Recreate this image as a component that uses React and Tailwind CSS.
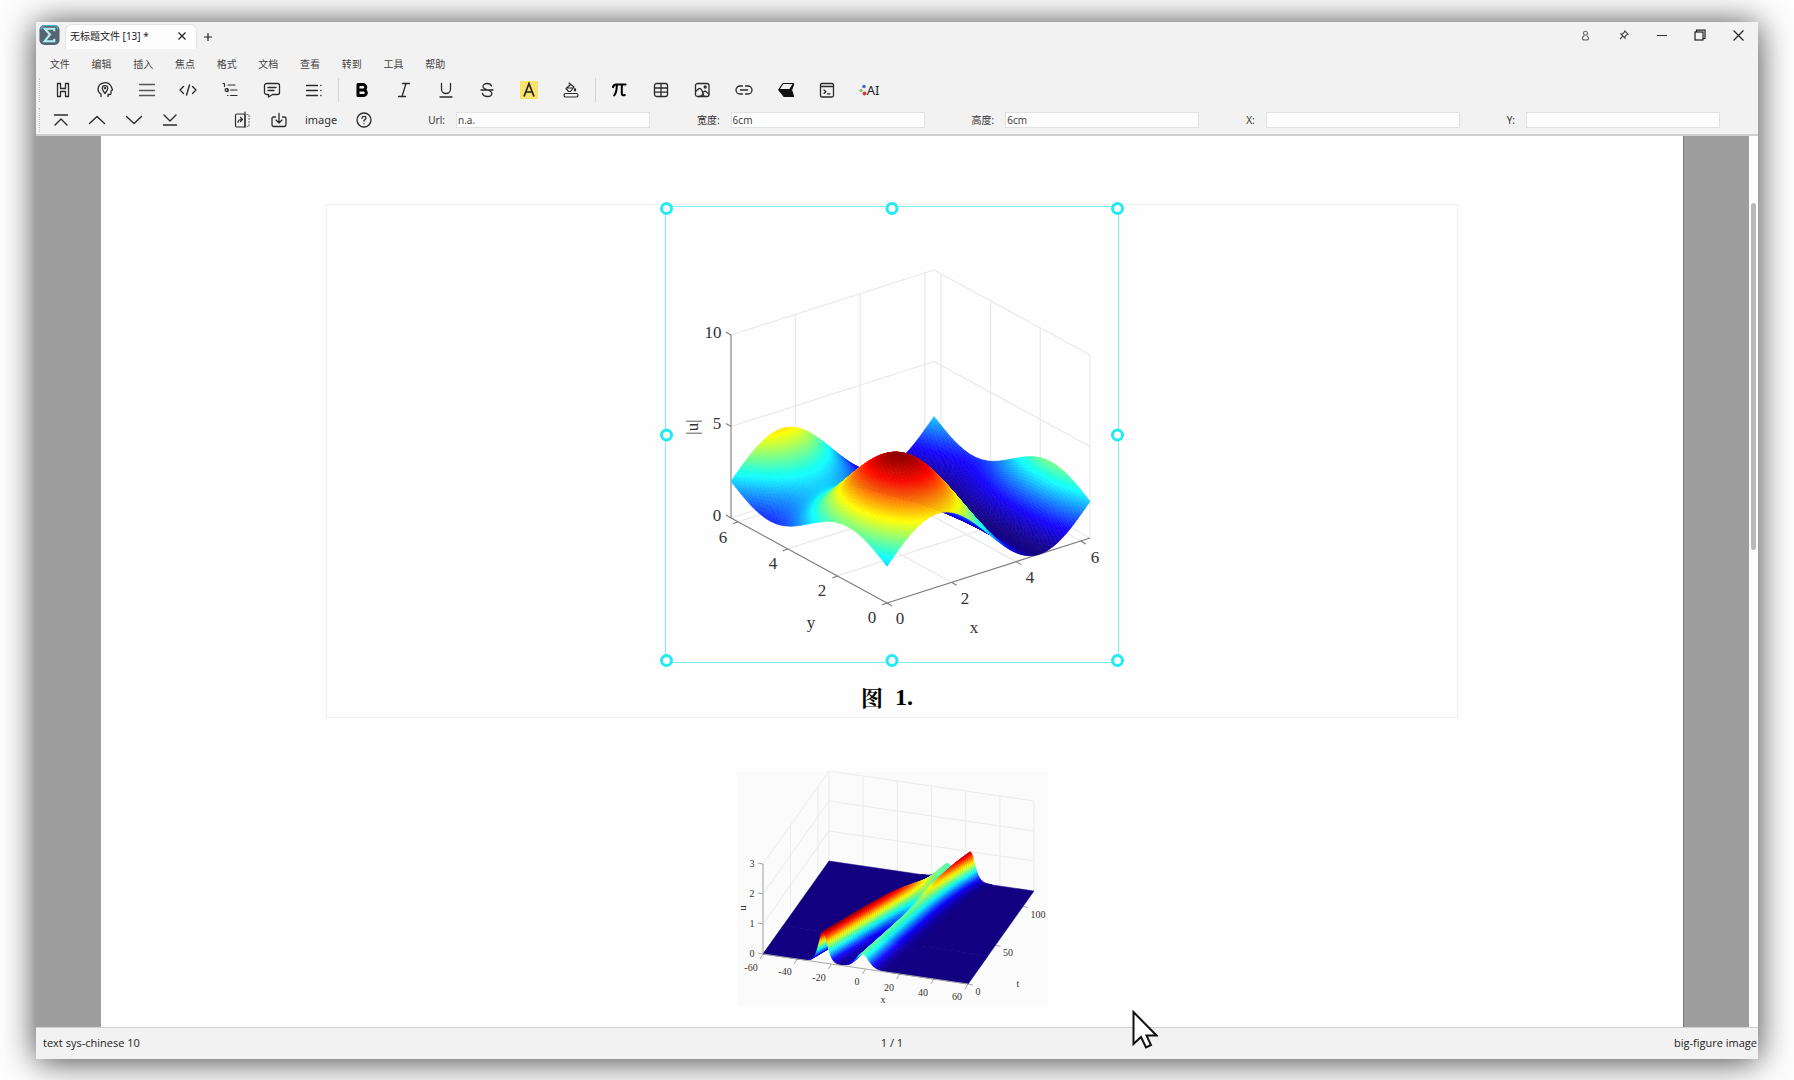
import React from "react";

/* ---------- colour map and projection shared by the two plots ---------- */

function jet(v) {
  const c = Math.max(0, Math.min(1, v));
  const ch = (p) => Math.round(255 * Math.max(0, Math.min(1, 1.5 - Math.abs(4 * c - p))));
  const r = Math.max(ch(3), 18);
  return `rgb(${r},${ch(2)},${ch(1)})`;
}

function makeProjector(o, a, b, h) {
  return (s, t, z) => [o[0] + s * a[0] + t * b[0], o[1] + s * a[1] + t * b[1] - z * h];
}

const fmt = (p) => `${p[0].toFixed(2)},${p[1].toFixed(2)}`;

/* Quads run from the far edge to the near one, so nearer ones cover the rest.
   Behind `flatFrom`, those that stay under `floor` are left to the flat base polygon. */
function buildSurface({ project, f, ns, nt, max, sDescending, floor = -1, flatFrom = 0 }) {
  const z = [];
  for (let i = 0; i <= ns; i++) {
    z.push([]);
    for (let j = 0; j <= nt; j++) z[i].push(f(i / ns, j / nt));
  }
  const quads = [];
  for (let j = nt - 1; j >= 0; j--) {
    for (let n = 0; n < ns; n++) {
      const i = sDescending ? ns - 1 - n : n;
      const mean = (z[i][j] + z[i + 1][j] + z[i + 1][j + 1] + z[i][j + 1]) / 4;
      if (mean < floor && j / nt >= flatFrom) continue;
      const pts = [
        project(i / ns, j / nt, z[i][j]),
        project((i + 1) / ns, j / nt, z[i + 1][j]),
        project((i + 1) / ns, (j + 1) / nt, z[i + 1][j + 1]),
        project(i / ns, (j + 1) / nt, z[i][j + 1]),
      ];
      quads.push({ key: `${i}-${j}`, points: pts.map(fmt).join(" "), fill: jet(mean / max) });
    }
  }
  return quads;
}

function Surface({ quads }) {
  return (
    <g strokeWidth="0.5" strokeLinejoin="round">
      {quads.map((q) => (
        <polygon key={q.key} points={q.points} fill={q.fill} stroke={q.fill} />
      ))}
    </g>
  );
}

function Seg({ a, b, ...rest }) {
  return <line x1={a[0]} y1={a[1]} x2={b[0]} y2={b[1]} {...rest} />;
}

function Labels({ items, size }) {
  return (
    <g fontFamily="'Liberation Serif', serif" fontSize={size} fill="#333" textAnchor="middle">
      {items.map(([text, x, y], i) => (
        <text key={i} x={x} y={y} dominantBaseline="central">
          {text}
        </text>
      ))}
    </g>
  );
}

/* ---------- first figure: (1 + sin x)(2 + sin y) ---------- */

const TAU = Math.PI * 2;
const waveProject = makeProjector([221, 396], [203, -65], [-156, -85], 18.3);
const waveQuads = buildSurface({
  project: waveProject,
  f: (s, t) => (1 + Math.sin(s * TAU)) * (2 + Math.sin(t * TAU)),
  ns: 130,
  nt: 130,
  max: 6.1,
  sDescending: true,
});

function WavePlot() {
  const p = waveProject;
  const ticks = [2, 4, 6].map((v) => v / TAU);
  return (
    <svg viewBox="0 0 452 455" className="block h-[455px] w-[452px]" role="img" aria-label="|u|(x, y)">
      <g stroke="#e9e9e9" strokeWidth="1.2">
        {[0, 5, 10].map((z) => (
          <g key={z}>
            <Seg a={p(0, 1, z)} b={p(1, 1, z)} />
            <Seg a={p(1, 1, z)} b={p(1, 0, z)} />
          </g>
        ))}
        {ticks.map((v) => (
          <g key={v}>
            <Seg a={p(v, 1, 0)} b={p(v, 1, 10)} />
            <Seg a={p(1, v, 0)} b={p(1, v, 10)} />
            <Seg a={p(v, 0, 0)} b={p(v, 1, 0)} />
            <Seg a={p(0, v, 0)} b={p(1, v, 0)} />
          </g>
        ))}
        <Seg a={p(1, 0, 0)} b={p(1, 0, 10)} />
      </g>
      <g stroke="#7a7a7a" strokeWidth="1.1">
        <Seg a={p(0, 1, 0)} b={p(0, 1, 10)} />
        <Seg a={p(0, 0, 0)} b={p(1, 0, 0)} />
        <Seg a={p(0, 0, 0)} b={p(0, 1, 0)} />
        {[0, 5, 10].map((z) => {
          const q = p(0, 1, z);
          return <Seg key={z} a={q} b={[q[0] - 5, q[1] - 3]} />;
        })}
        {[0, ...ticks].map((v) => {
          const q = p(v, 0, 0);
          const r = p(0, v, 0);
          return (
            <g key={v}>
              <Seg a={q} b={[q[0] + 5, q[1] + 3]} />
              <Seg a={r} b={[r[0] - 5, r[1] + 2]} />
            </g>
          );
        })}
      </g>
      <Surface quads={waveQuads} />
      <Labels
        size="17"
        items={[
          ["10", 47, 125], ["5", 51, 216], ["0", 51, 308],
          ["6", 57, 330], ["4", 107, 356], ["2", 156, 383], ["0", 206, 410],
          ["0", 234, 411], ["2", 299, 391], ["4", 364, 370], ["6", 429, 350],
          ["y", 145, 415], ["x", 308, 420],
        ]}
      />
      <text
        transform="translate(26 220) rotate(-90)"
        textAnchor="middle"
        dominantBaseline="central"
        fontFamily="'Liberation Serif', serif"
        fontSize="17"
        fill="#333"
      >
        |u|
      </text>
    </svg>
  );
}

/* ---------- second figure: a two-soliton KdV solution ---------- */

const K1 = 0.59;
const K2 = 0.404;
const SHIFT = ((K1 - K2) / (K1 + K2)) ** 2;
const FLAT_FROM = 0.3;

function solitons(s, t) {
  const x = s * 120 - 60;
  const time = t * 120;
  const e1 = Math.exp(K1 * (x + 24.8) - K1 ** 3 * time);
  const e2 = Math.exp(K2 * (x + 1.8) - K2 ** 3 * time - Math.log(SHIFT));
  const both = SHIFT * e1 * e2;
  const k = K1 + K2;
  const d0 = 1 + e1 + e2 + both;
  const d1 = (K1 * e1 + K2 * e2 + k * both) / d0;
  const d2 = (K1 * K1 * e1 + K2 * K2 * e2 + k * k * both) / d0;
  return 12 * (d2 - d1 * d1);
}

const solitonProject = makeProjector([26, 182], [205, 30], [66, -93], 30);
const solitonBase = [[0, FLAT_FROM], [1, FLAT_FROM], [1, 1], [0, 1]]
  .map(([s, t]) => fmt(solitonProject(s, t, 0)))
  .join(" ");
const solitonQuads = buildSurface({
  project: solitonProject,
  f: solitons,
  ns: 200,
  nt: 150,
  max: 1.05,
  sDescending: false,
  floor: 0.004,
  flatFrom: FLAT_FROM,
});

function SolitonPlot() {
  const p = solitonProject;
  const xs = [0, 1, 2, 3, 4, 5, 6].map((v) => v / 6);
  const ts = [0, 50 / 120, 100 / 120];
  return (
    <svg
      viewBox="0 0 311 235"
      className="block h-[235px] w-[311px] overflow-visible bg-[#fbfbfb]"
      role="img"
      aria-label="u(x, t)"
    >
      <g stroke="#ededed" strokeWidth="1.1">
        {[1, 2, 3].map((z) => (
          <g key={z}>
            <Seg a={p(0, 1, z)} b={p(1, 1, z)} />
            <Seg a={p(0, 0, z)} b={p(0, 1, z)} />
          </g>
        ))}
        {xs.map((v) => (
          <Seg key={v} a={p(v, 1, 0)} b={p(v, 1, 3)} />
        ))}
        {ts.map((v) => (
          <Seg key={v} a={p(0, v, 0)} b={p(0, v, 3)} />
        ))}
      </g>
      <g stroke="#a8a8a8" strokeWidth="1">
        <Seg a={p(0, 0, 0)} b={p(0, 0, 3)} />
        {[0, 1, 2, 3].map((z) => {
          const q = p(0, 0, z);
          return <Seg key={z} a={q} b={[q[0] - 5, q[1] - 1]} />;
        })}
        {xs.map((v) => {
          const q = p(v, 0, 0);
          return <Seg key={v} a={q} b={[q[0] - 3, q[1] + 5]} />;
        })}
        {ts.map((v) => {
          const q = p(1, v, 0);
          return <Seg key={v} a={q} b={[q[0] + 5, q[1] + 1]} />;
        })}
      </g>
      <polygon points={solitonBase} fill={jet(0)} stroke={jet(0)} strokeWidth="0.5" />
      <Surface quads={solitonQuads} />
      <Seg a={p(0, 0, 0)} b={p(1, 0, 0)} stroke="#a8a8a8" strokeWidth="1" />
      <Labels
        size="10"
        items={[
          ["3", 15, 91], ["2", 15, 121], ["1", 15, 151], ["0", 15, 181],
          ["-60", 14, 195], ["-40", 48, 199], ["-20", 82, 205], ["0", 120, 209],
          ["20", 152, 215], ["40", 186, 220], ["60", 220, 224], ["x", 146, 227],
          ["0", 241, 219], ["50", 271, 180], ["100", 301, 142], ["t", 281, 211],
        ]}
      />
      <text
        transform="translate(5 136) rotate(-90)"
        textAnchor="middle"
        dominantBaseline="central"
        fontFamily="'Liberation Serif', serif"
        fontSize="11"
        fill="#333"
      >
        u
      </text>
    </svg>
  );
}

/* ---------- icons ---------- */

function Icon({ children, width = "1.4", color = "#2b2b2b" }) {
  return (
    <svg
      viewBox="0 0 18 18"
      className="h-[18px] w-[18px]"
      fill="none"
      stroke={color}
      strokeWidth={width}
      strokeLinecap="round"
      strokeLinejoin="round"
      aria-hidden="true"
    >
      {children}
    </svg>
  );
}

const textStyleIcons = {
  heading: (
    <Icon width="1.3">
      <path d="M3.500 2.500h3v5h5v-5h3v13h-3v-5h-5v5h-3z" />
    </Icon>
  ),
  focus: (
    <Icon width="1.3">
      <path d="M5 15.500v-2.500C2.800 11.800 2 10 2 8a7 7 0 0 1 13.200-2.500l1.300 3.500-1.500 1v2.500q0 1-1.500 1h-1.500v2" />
      <path d="M9 12.500C7 10 6.300 8.800 6.300 7.300a2.700 2.700 0 0 1 5.400 0C11.700 8.800 11 10 9 12.500z" />
      <circle cx="9" cy="7.200" r=".5" />
    </Icon>
  ),
  lines: (
    <Icon width="1.3" color="#555">
      <path d="M1.500 3.500h15M1.500 9.500h15M1.500 14.500h15" />
    </Icon>
  ),
  code: (
    <Icon>
      <path d="M4.500 5.500 1 9l3.500 3.500M13.500 5.500 17 9l-3.500 3.500M10.500 4 7.500 14" />
    </Icon>
  ),
  outline: (
    <Icon width="1.2">
      <path d="M2 2.500h1.500v3M7 4h7M9.500 9h6.500M9.500 14.500h6.500" />
      <circle cx="5.500" cy="9" r="1.400" />
      <path d="M7 7.800v3M6.500 14.500h.5" />
    </Icon>
  ),
  comment: (
    <Icon width="1.3">
      <path d="M3.500 2.500h11a2 2 0 0 1 2 2v7a2 2 0 0 1-2 2H9.500L5.500 16v-2.500h-2a2 2 0 0 1-2-2v-7a2 2 0 0 1 2-2z" />
      <path d="M5 6.500h8M5 9.500h6" />
    </Icon>
  ),
  paragraph: (
    <Icon width="1.3">
      <path d="M1.500 4.500h11M1.500 9.500h11M1.500 14.500h11M15.800 4.500h.2M15.800 9.500h.2M15.800 14.500h.2" />
    </Icon>
  ),
};

const fontIcons = {
  bold: (
    <Icon width="3" color="#000">
      <path d="M5 9h5.500a2.800 2.800 0 0 1 0 5.600H5V3.400h5a2.800 2.800 0 0 1 0 5.600" />
    </Icon>
  ),
  italic: (
    <Icon width="1.3">
      <path d="M7.500 2.500h7M3.500 15.500h7M11 2.500 7 15.500" />
    </Icon>
  ),
  underline: (
    <Icon width="1.3">
      <path d="M4.500 2.500V8a4.500 4.500 0 0 0 9 0V2.500M3 16h12" />
    </Icon>
  ),
  strike: (
    <Icon width="1.3">
      <path d="M13.500 5C13 3.300 11.300 2.500 9.200 2.500 7 2.500 5 3.500 5 5.500c0 4 8.800 2.500 8.800 7 0 2-2 3-4.300 3-2.700 0-4.500-1-5-3M3 9h12" />
    </Icon>
  ),
  highlight: (
    <svg viewBox="0 0 18 18" className="h-[18px] w-[18px]" aria-hidden="true">
      <rect width="18" height="18" fill="#f8e36c" />
      <path d="M4 15.500 9 2.500l5 13M5.800 11h6.400" fill="none" stroke="#222" strokeWidth="1.700" />
    </svg>
  ),
  fill: (
    <Icon width="1.2">
      <rect x="2" y="12.500" width="14" height="3.500" rx="1.700" />
      <path d="m7 2 5 4-3.500 4.500h-2L4 7.500 8 4M4.500 7h6.500" />
      <path d="M13 7.500q1.300 1.800 0 2.500-1.300-.7 0-2.500z" fill="#2b2b2b" />
    </Icon>
  ),
};

const insertIcons = {
  formula: (
    <Icon color="#000">
      <path d="M3 6Q4 3.500 6 3.500h9.500" strokeWidth="2.200" />
      <path d="M6.800 4.500Q6.800 11 4.200 14.500M11.800 4.500v8q0 2.500 3 1.500" strokeWidth="2" />
    </Icon>
  ),
  table: (
    <Icon width="1.3">
      <rect x="2.500" y="2.500" width="13" height="13" rx="2" />
      <path d="M2.500 7h13M2.500 11.200h13M9 2.500v13" />
    </Icon>
  ),
  picture: (
    <Icon width="1.3">
      <rect x="2.500" y="2.500" width="13.500" height="13" rx="2" />
      <circle cx="12.200" cy="6" r="1" />
      <path d="M2.500 10.500 6 7.500q1.500-.5 3 2l2 5.500M9.700 11.500l2.300-1.500 4 3M6 15.500q3 0 4-3" />
    </Icon>
  ),
  link: (
    <Icon width="1.3">
      <path d="M7.500 5H5a4 4 0 0 0 0 8h2.500M10.500 5H13a4 4 0 0 1 0 8h-2.500M5.500 9h7" />
    </Icon>
  ),
  eraser: (
    <Icon width="1.2" color="#111">
      <path d="M6 2.500h10.500L13 8.500H2z" />
      <path d="M1.800 9h10.700l4-5.500-2 5.500 2 6.500H7z" fill="#111" />
    </Icon>
  ),
  terminal: (
    <Icon width="1.3">
      <rect x="2.500" y="2.500" width="13" height="13.500" rx="1.500" />
      <path d="M2.500 5.500h13M6 9l2 1.700-2 1.700M9.500 12.800h2.500" />
    </Icon>
  ),
};

function AiMark() {
  return (
    <span className="flex items-center" aria-hidden="true">
      <svg viewBox="0 0 8 14" className="h-[14px] w-[8px]">
        <circle cx="5" cy="3.500" r="1.800" fill="#4a63c9" />
        <circle cx="2" cy="7.500" r="1.700" fill="#8fc06a" />
        <circle cx="5.500" cy="10.500" r="1.900" fill="#c83f3f" />
      </svg>
      <span className="text-[13px] leading-none text-[#222]">AI</span>
    </span>
  );
}

function IconButton({ label, children }) {
  return (
    <button type="button" aria-label={label} title={label} className="flex h-[24px] items-center justify-center">
      {children}
    </button>
  );
}

function Grip() {
  return <span className="h-[24px] w-[6px] border-l border-dotted border-[#bdbdbd]" />;
}

function Divider() {
  return <span className="h-[24px] w-px bg-[#d4d4d4]" />;
}

/* ---------- window chrome ---------- */

function TitleBar() {
  return (
    <header className="flex h-[28px] items-start pl-[3px]">
      <svg viewBox="0 0 22 22" className="mt-[2px] h-[22px] w-[21px]" aria-hidden="true">
        <rect x=".5" y=".5" width="21" height="21" rx="5" fill="#54666f" />
        <path d="M2 5a5 5 0 0 1 4-4h10a5 5 0 0 1 4 4" fill="none" stroke="#3fb4e6" strokeWidth="1.2" />
        <path d="M16 7V4.500H6l5.500 6L6 17.500h10V15" fill="none" stroke="#b5eef6" strokeWidth="2.2" />
      </svg>
      <div className="mt-[2px] ml-[5px] flex h-[25px] w-[132px] items-center justify-between rounded-t-[6px] border border-b-0 border-[#e4e4e4] bg-[#fdfdfd] pb-[2px] pl-[4px]">
        <span className="text-[10px] text-[#222]">无标题文件 [13] *</span>
        <button type="button" aria-label="关闭标签" className="flex h-full w-[29px] items-center justify-center">
          <svg viewBox="0 0 8 8" className="h-[8px] w-[8px]" stroke="#222" strokeWidth="1.2">
            <path d="M.5.5l7 7M7.500.5l-7 7" />
          </svg>
        </button>
      </div>
      <button type="button" aria-label="新标签" className="mt-[2px] flex h-[26px] w-[22px] items-center justify-center">
        <svg viewBox="0 0 8 8" className="h-[8px] w-[8px]" stroke="#222" strokeWidth="1.2">
          <path d="M4 0v8M0 4h8" />
        </svg>
      </button>
      <div className="ml-auto grid w-[192px] grid-cols-5">
        <button type="button" aria-label="账户" className="flex h-[26px] items-center justify-center">
          <svg viewBox="0 0 10 12" className="h-[11px] w-[9px]" fill="none" stroke="#666" strokeWidth="1.2">
            <circle cx="5" cy="3.500" r="2.200" />
            <path d="M3.500 6.200Q1.500 7.500 1.500 9.500q0 1.500 3.500 1.500t3.500-1.500q0-2-2-3.300" />
          </svg>
        </button>
        <button type="button" aria-label="置顶" className="flex h-[26px] items-center justify-center">
          <svg viewBox="0 0 10 10" className="h-[10px] w-[10px]" fill="none" stroke="#444" strokeWidth="1.1">
            <path d="M5.800 1 9 4.200 7.800 4.700 6 6.500v1.600L1.900 4h1.600l1.800-1.800zM3.700 6.300 1 9" />
          </svg>
        </button>
        <button type="button" aria-label="最小化" className="flex h-[26px] items-center justify-center">
          <span className="h-[1px] w-[10px] bg-[#333]" />
        </button>
        <button type="button" aria-label="还原" className="flex h-[26px] items-center justify-center">
          <svg viewBox="0 0 12 12" className="h-[12px] w-[12px]" fill="none" stroke="#222" strokeWidth="1.2">
            <rect x="1" y="3" width="8" height="8" />
            <path d="M2.500 3V1.200H11v8.300H9" />
          </svg>
        </button>
        <button type="button" aria-label="关闭" className="flex h-[26px] items-center justify-center">
          <svg viewBox="0 0 10 10" className="h-[11px] w-[11px]" stroke="#222" strokeWidth="1.1">
            <path d="M.5.5l9 9M9.500.5l-9 9" />
          </svg>
        </button>
      </div>
    </header>
  );
}

const MENUS = ["文件", "编辑", "插入", "焦点", "格式", "文档", "查看", "转到", "工具", "帮助"];

function MenuBar() {
  return (
    <nav className="ml-[3px] grid h-[28px] w-[417px] grid-cols-10">
      {MENUS.map((m) => (
        <button key={m} type="button" className="text-[10px] text-[#444]">
          {m}
        </button>
      ))}
    </nav>
  );
}

function MainToolbar() {
  return (
    <div className="flex h-[24px] items-center pl-[3px]">
      <Grip />
      <div className="ml-[-3px] grid w-[293px] grid-cols-7">
        {Object.entries(textStyleIcons).map(([k, icon]) => (
          <IconButton key={k} label={k}>{icon}</IconButton>
        ))}
      </div>
      <span className="w-[3px]" />
      <Divider />
      <span className="w-[2px]" />
      <div className="grid w-[251px] grid-cols-6">
        {Object.entries(fontIcons).map(([k, icon]) => (
          <IconButton key={k} label={k}>{icon}</IconButton>
        ))}
      </div>
      <span className="w-[3px]" />
      <Divider />
      <span className="w-[2px]" />
      <div className="grid w-[292px] grid-cols-7">
        {Object.entries(insertIcons).map(([k, icon]) => (
          <IconButton key={k} label={k}>{icon}</IconButton>
        ))}
        <IconButton label="AI"><AiMark /></IconButton>
      </div>
    </div>
  );
}

function Field({ id, label, value }) {
  return (
    <div className="group contents">
      <label htmlFor={id} className="mr-[11px] text-[10px] whitespace-nowrap text-[#333]">{label}</label>
      <input
        id={id}
        type="text"
        defaultValue={value}
        className="mr-[47px] h-[16px] min-w-0 flex-1 border border-[#e2e2e2] bg-[#fdfdfd] px-[1px] text-[10px] text-[#444] outline-none group-last:mr-0"
      />
    </div>
  );
}

function FocusToolbar() {
  return (
    <div className="mt-[4px] flex h-[28px] items-center pr-[38px] pl-[3px]">
      <Grip />
      <div className="ml-[-2px] grid w-[145px] grid-cols-4">
        <IconButton label="首个"><Icon><path d="M2.500 4h13M3 14l6-6 6 6" /></Icon></IconButton>
        <IconButton label="上一个"><Icon><path d="M1.500 12.500 9 5.500l7.500 7" /></Icon></IconButton>
        <IconButton label="下一个"><Icon><path d="M1.500 5.500 9 12.500l7.500-7" /></Icon></IconButton>
        <IconButton label="最后"><Icon><path d="M2.500 14h13M3 4l6 6 6-6" /></Icon></IconButton>
      </div>
      <div className="ml-[36px] grid w-[73px] grid-cols-2">
        <IconButton label="变换">
          <Icon width="1.2">
            <rect x="2.500" y="3" width="9.500" height="13" rx="1.500" />
            <path d="M12 1v15.500" />
            <path d="M5 11.500q0-3 4-3M7.500 6.500l2 2-2 2" />
            <path d="M14 3.500h2v12h-2" strokeDasharray="1 2" stroke="#777" />
          </Icon>
        </IconButton>
        <IconButton label="导出">
          <Icon width="1.3">
            <path d="M5.500 6H3.500Q2 6 2 7.500v6Q2 15.500 3.500 15.500h11q1.500 0 1.500-2v-6Q16 6 14.500 6h-2M9 2.500v9M6 9l3 3 3-3" />
          </Icon>
        </IconButton>
      </div>
      <span className="ml-[8px] text-[11px] text-[#333]">image</span>
      <span className="ml-[18px] flex">
        <IconButton label="帮助">
          <Icon width="1.3">
            <circle cx="9" cy="9" r="7" />
            <path d="M7 7.300q0-2 2-2t2 1.800q0 1.200-2 2.200v.9M9 12.700v.1" />
          </Icon>
        </IconButton>
      </span>
      <div className="ml-[55px] flex flex-1 items-center">
        <Field id="url" label="Url:" value="n.a." />
        <Field id="width" label="宽度:" value="6cm" />
        <Field id="height" label="高度:" value="6cm" />
        <Field id="pos-x" label="X:" value="" />
        <Field id="pos-y" label="Y:" value="" />
      </div>
    </div>
  );
}

/* ---------- document ---------- */

const HANDLES = [
  "left-[-6px] top-[-5px]",
  "left-1/2 top-[-5px] -translate-x-1/2",
  "right-[-6px] top-[-5px]",
  "left-[-6px] top-1/2 -translate-y-1/2",
  "right-[-6px] top-1/2 -translate-y-1/2",
  "left-[-6px] bottom-[-5px]",
  "left-1/2 bottom-[-5px] -translate-x-1/2",
  "right-[-6px] bottom-[-5px]",
];

function SelectedFigure() {
  return (
    <div className="relative border border-[#7deff2]">
      <WavePlot />
      {HANDLES.map((pos) => (
        <span key={pos} className={`absolute h-[13px] w-[13px] rounded-full border-[3px] border-[#22eaf2] bg-white ${pos}`} />
      ))}
    </div>
  );
}

function DocumentArea() {
  return (
    <main className="flex flex-1 border-t-2 border-b border-[#cfcfcf] bg-[#fdfdfd]">
      <div className="flex flex-1 bg-[#9e9e9e] px-[65px]">
        <article className="flex flex-1 flex-col items-center border-r border-[#777] bg-[#fefefe] px-[225px] pt-[68px] pb-[20px]">
          <figure className="flex h-[514px] w-full flex-col items-center border border-[#efefef] pt-[1px]">
            <SelectedFigure />
            <figcaption className="mt-[18px] mr-[10px] flex items-center gap-[12px] text-[22px] leading-[32px] font-bold text-black">
              <span className="font-['Noto_Serif_CJK_SC','Noto_Sans_CJK_SC',serif]">图</span>
              <span className="font-['Liberation_Serif',serif] text-[24px]">1.</span>
            </figcaption>
          </figure>
          <div className="mt-[54px]">
            <SolitonPlot />
          </div>
        </article>
      </div>
      <div className="flex w-[9px] justify-center pt-[67px]">
        <span className="h-[347px] w-[5px] rounded-full bg-[#b9b9b9]" />
      </div>
    </main>
  );
}

function StatusBar() {
  return (
    <footer className="grid h-[31px] grid-cols-[1fr_auto_1fr] items-center pr-px pl-[7px] font-['Open_Sans',sans-serif] text-[11px] text-[#222]">
      <span>text sys-chinese 10</span>
      <span className="mr-[16px]">1 / 1</span>
      <span className="text-right">big-figure image</span>
    </footer>
  );
}

function Pointer() {
  return (
    <svg viewBox="0 0 26 39" className="pointer-events-none absolute top-[988px] left-[1096px] h-[39px] w-[26px]" aria-hidden="true">
      <path d="M1.500 2v32l7.500-7 5 10.500 5-2.500-4.500-9.500H24.500z" fill="#fff" stroke="#111" strokeWidth="2" />
    </svg>
  );
}

export default function App() {
  return (
    <div className="flex min-h-screen bg-[#fefefe] pt-[22px] pr-[36px] pb-[21px] pl-[36px] font-['Noto_Sans','Noto_Sans_CJK_SC',sans-serif]">
      <div className="relative flex flex-1 flex-col bg-[#f2f2f2] shadow-[0_2px_32px_rgba(0,0,0,0.75)]">
        <TitleBar />
        <MenuBar />
        <MainToolbar />
        <FocusToolbar />
        <DocumentArea />
        <StatusBar />
        <Pointer />
      </div>
    </div>
  );
}
